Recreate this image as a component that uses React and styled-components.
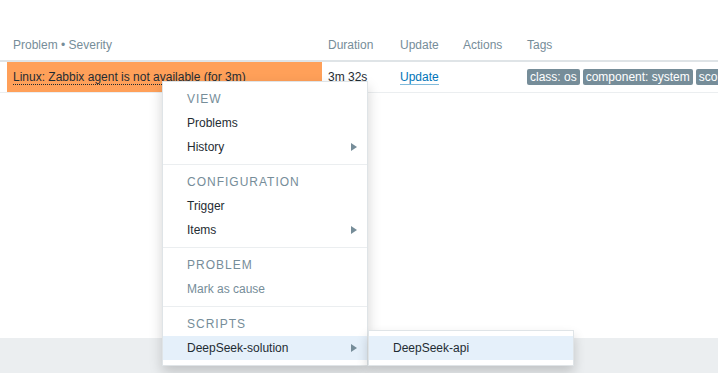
import React from "react";
import styled, { createGlobalStyle } from "styled-components";

const Global = createGlobalStyle`
  html, body { margin: 0; padding: 0; }
  body {
    font-family: "Liberation Sans", Arial, sans-serif;
    font-size: 12px;
    color: #1f2c33;
    background: #ffffff;
    overflow: hidden;
  }
`;

const Page = styled.div`
  position: relative;
  width: 718px;
  height: 373px;
  display: flex;
  flex-direction: column;
  overflow: hidden;
`;

const Content = styled.div`
  height: 338px;
  background: #ffffff;
  padding-top: 30px;
  box-sizing: border-box;
`;

const Footer = styled.div`
  flex: 1;
  background: #ebeef0;
`;

const Row = styled.div`
  display: grid;
  grid-template-columns: 7px 315px 72px 63px 64px 1fr;
  height: 30px;
  border-bottom: ${(p) => (p.$head ? "2px solid #dfe4e7" : "1px solid #ebeef0")};
  white-space: nowrap;
`;

const Cell = styled.div`
  display: flex;
  align-items: center;
  padding: 0 6px;
  overflow: ${(p) => (p.$clip ? "hidden" : "visible")};
  background: ${(p) => p.$bg || "transparent"};
  color: ${(p) => (p.$head ? "#768d99" : "#1f2c33")};
`;

const Spacer = styled.div``;

const Dotted = styled.span`
  border-bottom: 1px dotted #1f2c33;
  line-height: 14px;
`;

const Link = styled.span`
  color: #0275b8;
  border-bottom: 1px solid rgba(2, 117, 184, 0.5);
  line-height: 14px;
`;

const Tags = styled.div`
  display: flex;
  gap: 3px;
`;

const Tag = styled.span`
  background: #768d99;
  color: #ffffff;
  border-radius: 2px;
  padding: 0 3px;
  height: 16px;
  line-height: 16px;
`;

const Menu = styled.div`
  position: absolute;
  left: ${(p) => p.$left}px;
  top: ${(p) => p.$top}px;
  width: 206px;
  box-sizing: border-box;
  background: #ffffff;
  border: 1px solid #dfe4e7;
  box-shadow: 0 6px 12px rgba(0, 0, 0, 0.18);
`;

const Section = styled.div`
  padding: 5px 0;
  border-top: ${(p) => (p.$first ? "none" : "1px solid #ebeef0")};
`;

const SectionTitle = styled.div`
  height: 24px;
  line-height: 24px;
  padding-left: 24px;
  color: #768d99;
  text-transform: uppercase;
  letter-spacing: 1px;
  font-size: 12px;
`;

const Item = styled.div`
  position: relative;
  height: 24px;
  line-height: 24px;
  padding-left: 24px;
  color: ${(p) => (p.$disabled ? "#768d99" : "#1f2c33")};
  background: ${(p) => (p.$active ? "#e5f0fa" : "transparent")};
`;

const Arrow = styled.span`
  position: absolute;
  right: 10px;
  top: 8px;
  width: 0;
  height: 0;
  border-top: 4px solid transparent;
  border-bottom: 4px solid transparent;
  border-left: 6px solid #768d99;
`;

export default function App() {
  return (
    <Page>
      <Global />
      <Content>
        <Row $head>
          <Spacer />
          <Cell $head>Problem • Severity</Cell>
          <Cell $head>Duration</Cell>
          <Cell $head>Update</Cell>
          <Cell $head>Actions</Cell>
          <Cell $head>Tags</Cell>
        </Row>
        <Row>
          <Spacer />
          <Cell $bg="#ffa059">
            <Dotted>Linux: Zabbix agent is not available (for 3m)</Dotted>
          </Cell>
          <Cell>3m 32s</Cell>
          <Cell>
            <Link>Update</Link>
          </Cell>
          <Cell />
          <Cell $clip>
            <Tags>
              <Tag>class: os</Tag>
              <Tag>component: system</Tag>
              <Tag>scope: availability</Tag>
            </Tags>
          </Cell>
        </Row>
      </Content>
      <Footer />
      <Menu $left={162} $top={81}>
        <Section $first>
          <SectionTitle>View</SectionTitle>
          <Item>Problems</Item>
          <Item>
            History
            <Arrow />
          </Item>
        </Section>
        <Section>
          <SectionTitle>Configuration</SectionTitle>
          <Item>Trigger</Item>
          <Item>
            Items
            <Arrow />
          </Item>
        </Section>
        <Section>
          <SectionTitle>Problem</SectionTitle>
          <Item $disabled>Mark as cause</Item>
        </Section>
        <Section>
          <SectionTitle>Scripts</SectionTitle>
          <Item $active>
            DeepSeek-solution
            <Arrow />
          </Item>
        </Section>
      </Menu>
      <Menu $left={368} $top={330}>
        <Section $first>
          <Item $active>DeepSeek-api</Item>
        </Section>
      </Menu>
    </Page>
  );
}
